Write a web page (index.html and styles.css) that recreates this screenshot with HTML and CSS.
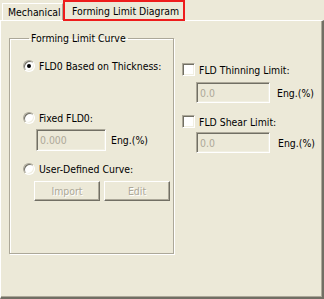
FILE: index.html
```html
<!DOCTYPE html>
<html lang="en">
<head>
  <meta charset="UTF-8">
  <title>Forming Limit Diagram</title>
  <link rel="stylesheet" href="styles.css">
</head>
<body>
  <div class="window">
    <div class="tabs">
      <div class="tab">Mechanical</div>
      <div class="tab active">Forming Limit Diagram</div>
    </div>

    <div class="panel">
      <fieldset class="group">
        <legend>Forming Limit Curve</legend>

        <div class="option first"><span class="radio checked"></span>FLD0 Based on Thickness:</div>

        <div class="option second"><span class="radio"></span>Fixed FLD0:</div>
        <div class="field left-field">
          <div class="edit">0.000</div>
          <span>Eng.(%)</span>
        </div>

        <div class="option third"><span class="radio"></span>User-Defined Curve:</div>
        <div class="buttons">
          <div class="btn">Import</div>
          <div class="btn">Edit</div>
        </div>
      </fieldset>

      <div class="limits">
        <div class="option"><span class="check"></span>FLD Thinning Limit:</div>
        <div class="field right-field">
          <div class="edit wide">0.0</div>
          <span>Eng.(%)</span>
        </div>

        <div class="option shear"><span class="check"></span>FLD Shear Limit:</div>
        <div class="field right-field second-field">
          <div class="edit wide">0.0</div>
          <span>Eng.(%)</span>
        </div>
      </div>
    </div>
  </div>
</body>
</html>
```

FILE: styles.css
```css
body {
  margin: 0;
  background: #ece9d8;
  font-family: "DejaVu Sans Condensed", "DejaVu Sans", sans-serif;
  font-size: 10.4px;
  color: #000;
}
.window {
  width: 324px;
  height: 299px;
  background: #ece9d8;
}

/* tabs */
.tabs {
  display: flex;
  align-items: flex-end;
  height: 20px;
  padding-left: 2px;
}
.tab {
  height: 17px;
  line-height: 17px;
  padding: 0 4px 0 5px;
  border-top: 1px solid #fff;
  border-left: 1px solid #fff;
  border-right: 1px solid #aca899;
  box-sizing: border-box;
  width: 61px;
  white-space: nowrap;
}
.tab.active {
  position: relative;
  width: 122px;
  height: 21px;
  line-height: 18px;
  margin-bottom: -1px;
  padding-left: 7px;
  border: 2px solid #ee1c1c;
  background: #ece9d8;
  z-index: 1;
}

/* panel */
.panel {
  display: flex;
  align-items: flex-start;
  height: 279px;
  box-sizing: border-box;
  border-top: 1px solid #fff;
  border-left: 1px solid #fff;
  border-right: 2px solid #716f64;
  border-bottom: 2px solid #716f64;
  box-shadow: inset -1px -1px 0 #aca899;
  padding: 11px 0 0 8px;
}

/* group box */
.group {
  margin: 0;
  padding: 0 0 0 13px;
  width: 165px;
  height: 222px;
  box-sizing: border-box;
  border: 1px solid #aca899;
  box-shadow: inset 1px 1px 0 #fff, 1px 1px 0 #fff;
}
.group legend {
  padding: 0 2px;
  margin-left: 6px;
  line-height: 12px;
}

.option {
  display: flex;
  align-items: center;
  gap: 4px;
  height: 13px;
  white-space: nowrap;
}
.option.first { margin-top: 15px; }
.option.second { margin-top: 39px; }
.option.third { margin-top: 11px; }

.radio {
  width: 12px;
  height: 12px;
  box-sizing: border-box;
  border-radius: 50%;
  background: #fff;
  border: 1px solid;
  border-color: #aca899 #fff #fff #aca899;
  box-shadow: inset 1px 1px 0 #716f64, inset -1px -1px 0 #f1efe2;
  display: flex;
  align-items: center;
  justify-content: center;
  flex-shrink: 0;
}
.radio.checked::after {
  content: "";
  width: 4px;
  height: 4px;
  border-radius: 50%;
  background: #000;
}

.check {
  width: 13px;
  height: 13px;
  box-sizing: border-box;
  background: #fff;
  border: 1px solid;
  border-color: #aca899 #fff #fff #aca899;
  box-shadow: inset 1px 1px 0 #716f64, inset -1px -1px 0 #f1efe2;
  flex-shrink: 0;
}

.field {
  display: flex;
  align-items: center;
  gap: 5px;
}
.left-field {
  margin: 5px 0 0 13px;
}
.edit {
  width: 70px;
  height: 22px;
  box-sizing: border-box;
  border: 1px solid;
  border-color: #aca899 #fff #fff #aca899;
  box-shadow: inset 1px 1px 0 #716f64, inset -1px -1px 0 #f1efe2;
  color: #aca899;
  padding: 3px 0 0 3px;
  line-height: 14px;
  flex-shrink: 0;
}
.edit.wide {
  width: 74px;
  height: 21px;
}

.buttons {
  display: flex;
  gap: 4px;
  margin: 6px 0 0 11px;
}
.btn {
  width: 66px;
  height: 20px;
  box-sizing: border-box;
  border: 1px solid;
  border-color: #fff #716f64 #716f64 #fff;
  box-shadow: inset -1px -1px 0 #aca899;
  color: #aca899;
  text-shadow: 1px 1px 0 #fff;
  text-align: center;
  line-height: 18px;
}

/* right column */
.limits {
  margin-left: 8px;
  padding-top: 31px;
}
.right-field {
  margin: 6px 0 0 14px;
  gap: 7px;
}
.option.shear { margin-top: 12px; }
.second-field {
  margin-top: 4px;
  gap: 8px;
}
```
